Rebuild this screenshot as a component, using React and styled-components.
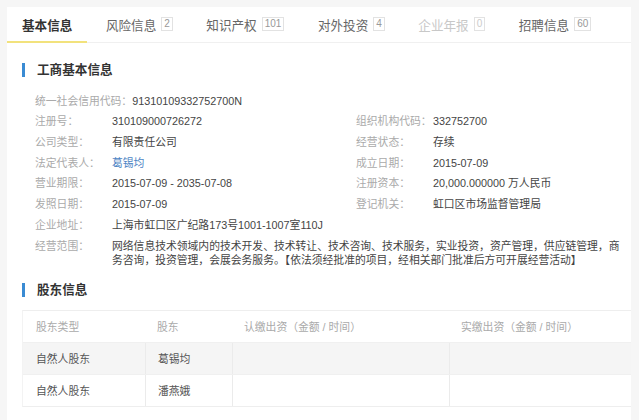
import React from 'react';
import styled, { createGlobalStyle } from 'styled-components';

const GlobalStyle = createGlobalStyle`
  html, body {
    margin: 0;
    padding: 0;
    background: #f6f6f6;
  }
  body {
    font-family: "Liberation Sans", "Noto Sans CJK SC", sans-serif;
  }
`;

const Page = styled.div`
  padding: 7px 8px 0 7px;
  height: 413px;
  overflow: hidden;
`;

const Card = styled.div`
  background: #fff;
  height: 100%;
  overflow: hidden;
`;

const TabBar = styled.div`
  display: flex;
  gap: 3.5px;
  height: 35px;
  border-bottom: 1px solid #f0f0f0;
`;

const Tab = styled.div`
  display: flex;
  align-items: center;
  padding: 0 15px;
  margin-bottom: -1px;
  font-size: 12.6px;
  font-weight: ${(p) => (p.$active ? 700 : 400)};
  color: ${(p) => (p.$active ? '#333' : p.$disabled ? '#c8c8c8' : '#666')};
  border-bottom: 2px solid ${(p) => (p.$active ? '#f2e27c' : 'transparent')};
`;

const Badge = styled.span`
  margin-left: 5px;
  padding: 0 2px;
  border: 1px solid #e2e2e2;
  font-size: 10px;
  line-height: 12px;
  color: ${(p) => (p.$disabled ? '#ccc' : '#999')};
  font-weight: 400;
`;

const Body = styled.div`
  padding: 19px 0 0 15px;
`;

const SectionTitle = styled.div`
  display: flex;
  align-items: center;
  gap: 12px;
  font-size: 12.6px;
  line-height: 16px;
  font-weight: 700;
  color: #333;
  margin-bottom: ${(p) => p.$gap}px;

  &::before {
    content: '';
    width: 3px;
    height: 14px;
    background: #3a8bd3;
  }
`;

const InfoGrid = styled.div`
  display: grid;
  grid-template-columns: 321px 1fr;
  margin-left: 13px;
  padding-right: 6px;
  margin-bottom: 11px;
`;

const Field = styled.div`
  display: flex;
  grid-column: ${(p) => (p.$full ? '1 / span 2' : 'auto')};
  padding: 3px 0;
  font-size: 10.8px;
  line-height: 14.7px;
`;

const Label = styled.span`
  flex: none;
  min-width: 77px;
  color: #aaa;
  white-space: nowrap;
`;

const Value = styled.span`
  color: ${(p) => (p.$link ? '#4d84c4' : '#444')};
`;

const Table = styled.div`
  border-top: 1px solid #eee;
  border-left: 1px solid #f3f3f3;
  border-bottom: 1px solid #eee;
  font-size: 10.8px;
`;

const TRow = styled.div`
  display: grid;
  grid-template-columns: 122px 87px 217px 1fr;
  height: 31px;
  background: ${(p) => (p.$shade ? '#f5f5f5' : '#fff')};
  & + & {
    border-top: 1px solid #f0f0f0;
  }
`;

const Cell = styled.div`
  display: flex;
  align-items: center;
  padding-left: ${(p) => (p.$first ? 13 : 12)}px;
  color: ${(p) => (p.$head ? '#aaa' : '#555')};
  border-left: ${(p) => (p.$head || p.$first ? 'none' : '1px solid #ebebeb')};
`;

const tabs = [
  { name: '基本信息', active: true },
  { name: '风险信息', count: 2 },
  { name: '知识产权', count: 101 },
  { name: '对外投资', count: 4 },
  { name: '企业年报', count: 0, disabled: true },
  { name: '招聘信息', count: 60 },
];

const fields = [
  { label: '统一社会信用代码：', value: '91310109332752700N', full: true },
  { label: '注册号：', value: '310109000726272' },
  { label: '组织机构代码：', value: '332752700' },
  { label: '公司类型：', value: '有限责任公司' },
  { label: '经营状态：', value: '存续' },
  { label: '法定代表人：', value: '葛锡均', link: true },
  { label: '成立日期：', value: '2015-07-09' },
  { label: '营业期限：', value: '2015-07-09 - 2035-07-08' },
  { label: '注册资本：', value: '20,000.000000 万人民币' },
  { label: '发照日期：', value: '2015-07-09' },
  { label: '登记机关：', value: '虹口区市场监督管理局' },
  { label: '企业地址：', value: '上海市虹口区广纪路173号1001-1007室110J', full: true },
  {
    label: '经营范围：',
    value:
      '网络信息技术领域内的技术开发、技术转让、技术咨询、技术服务，实业投资，资产管理，供应链管理，商务咨询，投资管理，会展会务服务。【依法须经批准的项目，经相关部门批准后方可开展经营活动】',
    full: true,
  },
];

const holders = [
  { type: '自然人股东', name: '葛锡均' },
  { type: '自然人股东', name: '潘燕娥' },
];

export default function App() {
  return (
    <>
      <GlobalStyle />
      <Page>
        <Card>
          <TabBar>
            {tabs.map((t) => (
              <Tab key={t.name} $active={t.active} $disabled={t.disabled}>
                {t.name}
                {t.count !== undefined && <Badge $disabled={t.disabled}>{t.count}</Badge>}
              </Tab>
            ))}
          </TabBar>
          <Body>
            <SectionTitle $gap={12.6}>工商基本信息</SectionTitle>
            <InfoGrid>
              {fields.map((f) => (
                <Field key={f.label} $full={f.full}>
                  <Label>{f.label}</Label>
                  <Value $link={f.link}>{f.value}</Value>
                </Field>
              ))}
            </InfoGrid>
            <SectionTitle $gap={12}>股东信息</SectionTitle>
            <Table>
              <TRow>
                <Cell $head $first>股东类型</Cell>
                <Cell $head>股东</Cell>
                <Cell $head>认缴出资（金额 / 时间）</Cell>
                <Cell $head>实缴出资（金额 / 时间）</Cell>
              </TRow>
              {holders.map((h, i) => (
                <TRow key={h.name} $shade={i === 0}>
                  <Cell $first>{h.type}</Cell>
                  <Cell>{h.name}</Cell>
                  <Cell />
                  <Cell />
                </TRow>
              ))}
            </Table>
          </Body>
        </Card>
      </Page>
    </>
  );
}
